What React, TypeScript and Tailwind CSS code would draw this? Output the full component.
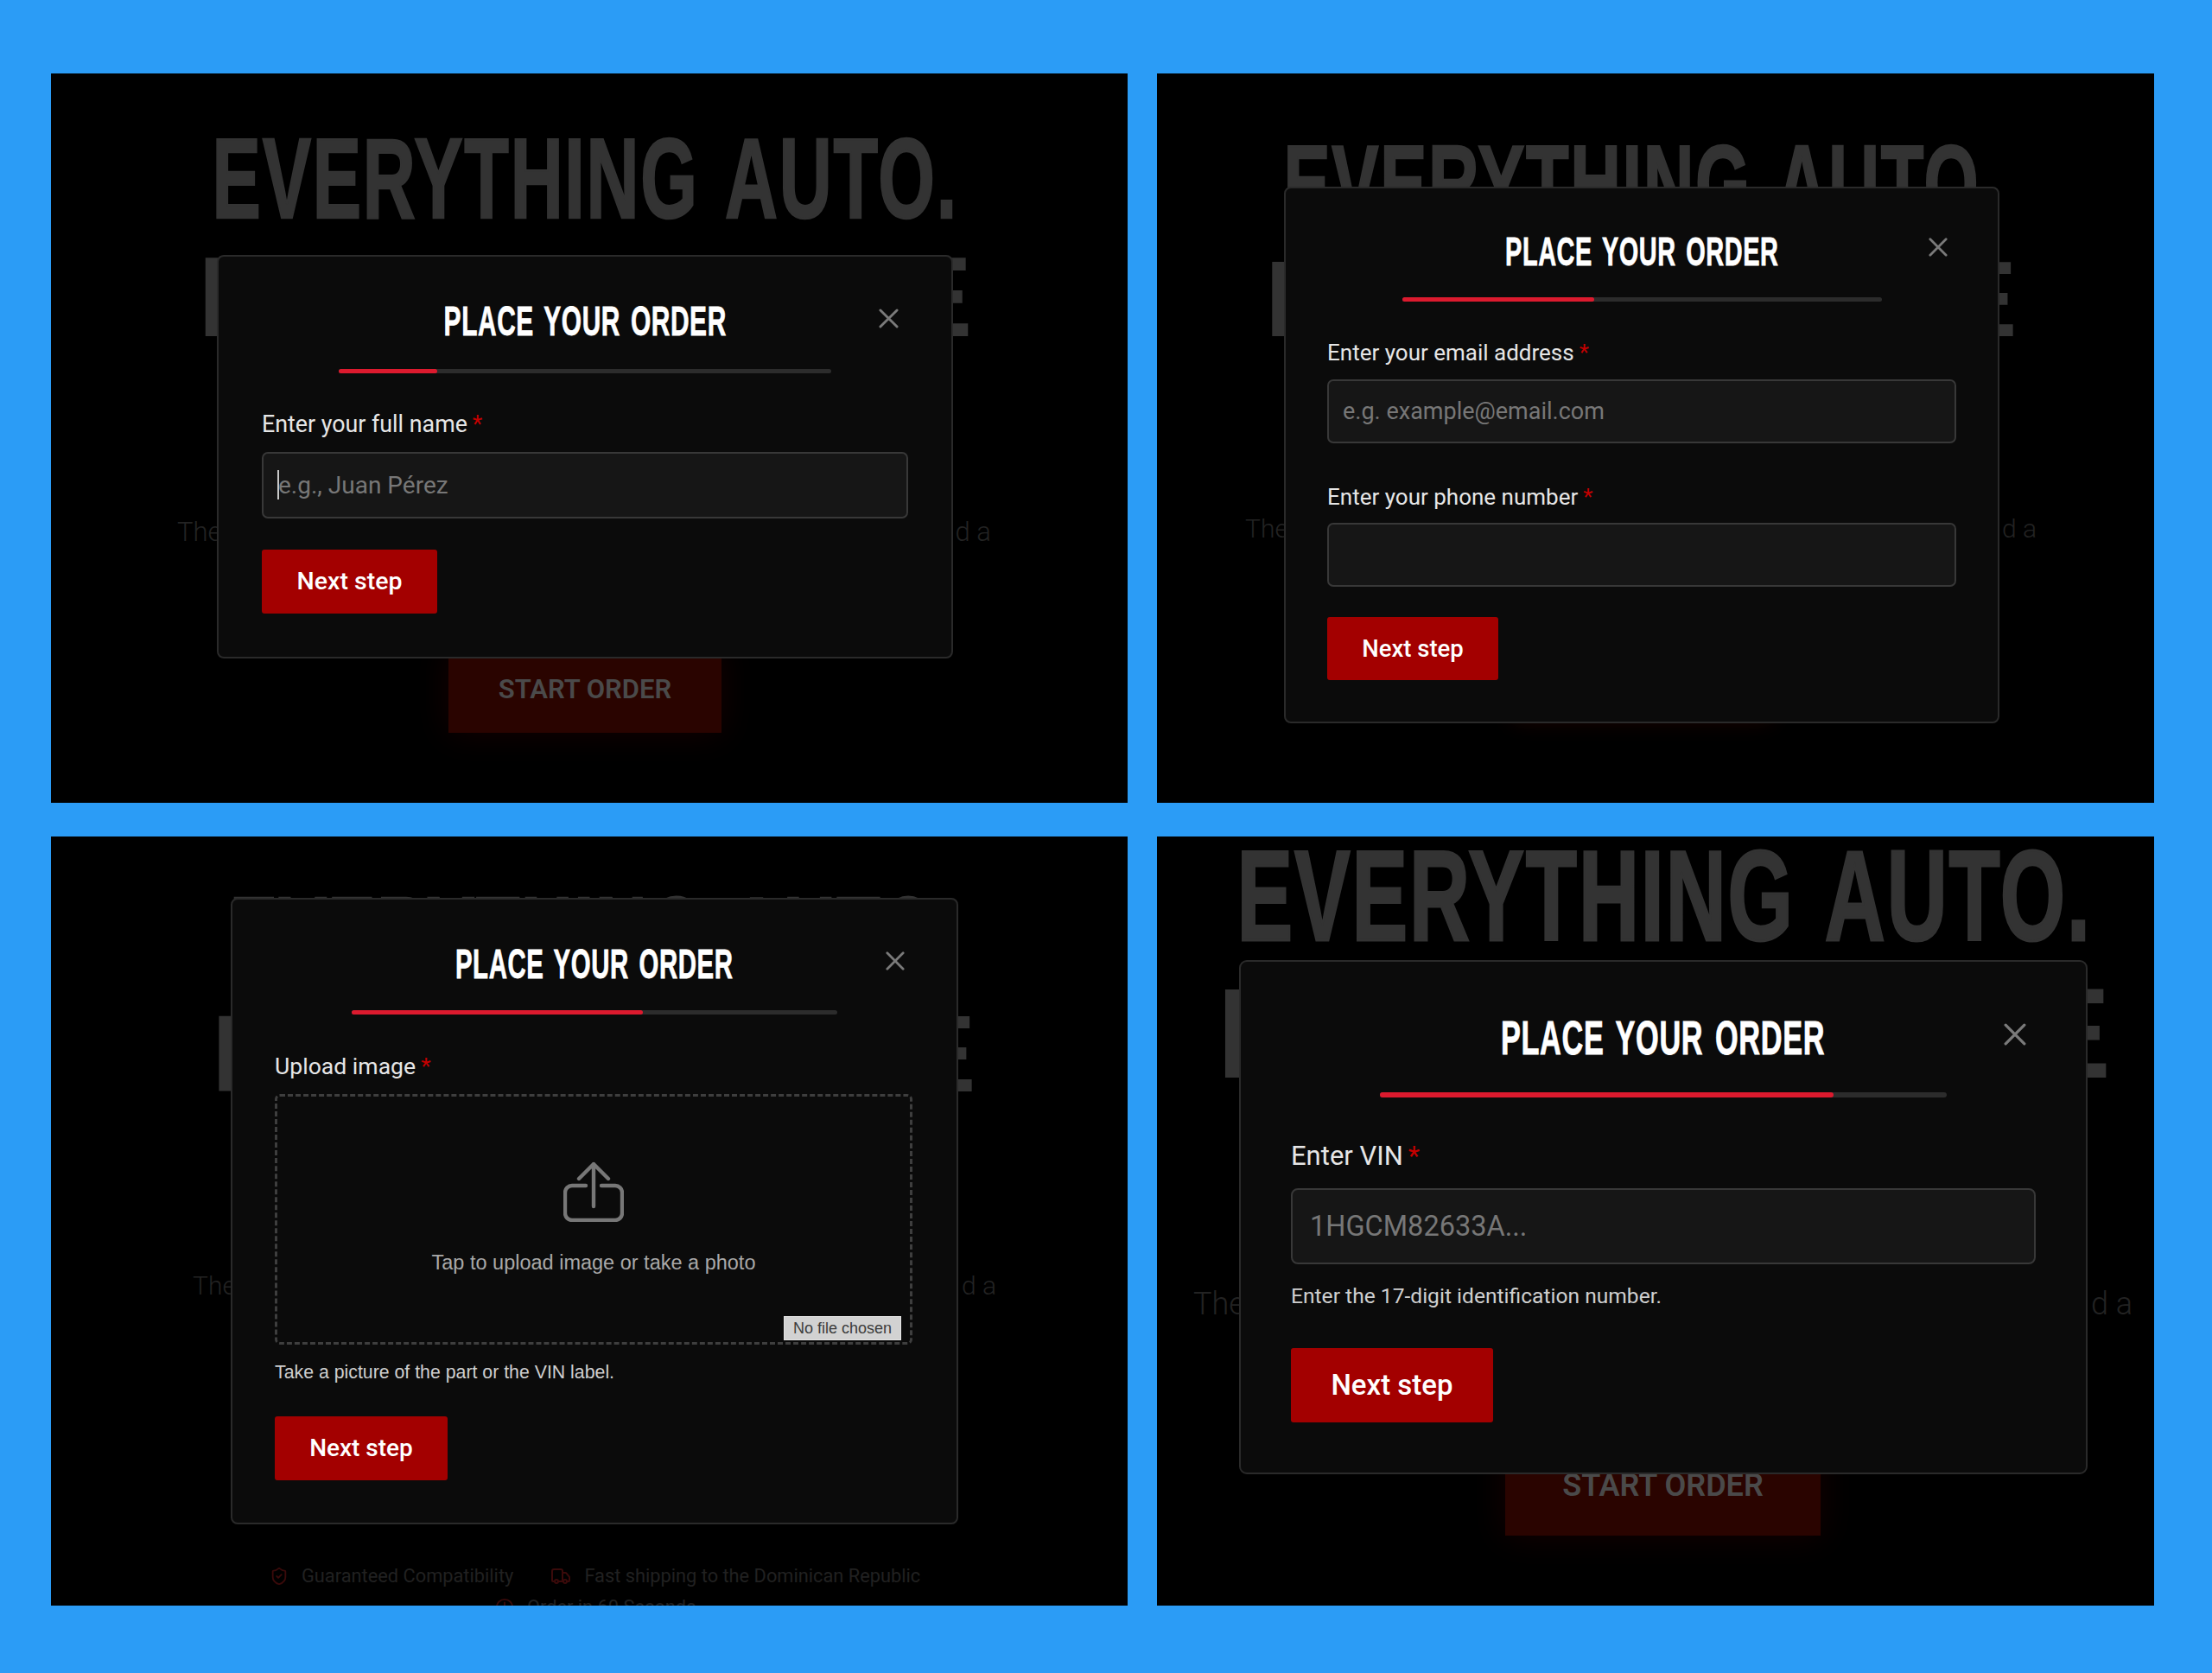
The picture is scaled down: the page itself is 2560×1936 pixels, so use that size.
import React from "react";
import { ShieldCheck, Truck, Clock } from "lucide-react";

const HEAD = "font-['Liberation_Sans',sans-serif] font-bold tracking-[0.02em] [word-spacing:0.1em]";

function CloseIcon({ className }: { className: string }) {
  return (
    <svg viewBox="0 0 24 24" fill="none" stroke="#7a7a7a" strokeWidth="3" strokeLinecap="round" className={className}>
      <path d="M2 2 22 22M22 2 2 22" />
    </svg>
  );
}

function ShareIcon() {
  return (
    <svg viewBox="0 0 70 70" fill="none" stroke="#777" strokeWidth="4.4" strokeLinecap="round" strokeLinejoin="round" className="w-[70px] h-[70px]">
      <path d="M26 28H10a8 8 0 0 0-8 8V60a8 8 0 0 0 8 8H60a8 8 0 0 0 8-8V36a8 8 0 0 0-8-8H44" />
      <path d="M35 52V3M18 20 35 3 52 20" />
    </svg>
  );
}

function Req() {
  return <span className="text-[#c40000] ml-[6px]">*</span>;
}

function Panel1() {
  return (
    <section className="relative overflow-hidden bg-black">
      <div className="pt-[72px] flex flex-col items-start">
        <div className={`ml-[186px] w-[865px] h-[100px] flex items-center justify-center text-[#333] text-[131px] whitespace-nowrap ${HEAD}`}>
          <span className="scale-x-[0.645] [-webkit-text-stroke:2.5px_#333]">EVERYTHING AUTO.</span>
        </div>
        <div className={`ml-[170px] mt-[37px] w-[899px] h-[100px] flex items-center justify-between text-[#333] text-[131px] ${HEAD}`}>
          <span>P</span>
          <span>E</span>
        </div>
        <div className="ml-[146px] mt-[204px] w-[942px] h-[36px] flex items-center justify-between text-[#232323] text-[31px] font-light">
          <span>The</span>
          <span>d a</span>
        </div>
        <div className="ml-[460px] mt-[114px] w-[316px] h-[100px] bg-[#2a0400] shadow-[0_0_40px_rgba(120,10,0,0.18)] flex items-center justify-center text-[#4a4a4a] text-[31px] font-semibold">
          START ORDER
        </div>
      </div>
      <div className="absolute left-[192px] top-[210px] w-[852px] bg-[#0b0b0b] border-2 border-[#2a2a2a] rounded-[8px] p-[50px] flex flex-col">
        <div className="h-[50px] flex items-center justify-center text-white text-[49px] whitespace-nowrap">
          <span className={`scale-x-[0.61] [-webkit-text-stroke:0.8px_#fff] ${HEAD}`}>PLACE YOUR ORDER</span>
        </div>
        <div className="mx-auto mt-[30px] w-[570px] h-[5px] rounded-full bg-[#2c2c2c]">
          <div className="w-[20%] h-full rounded-full bg-[#dc1a2e]" />
        </div>
        <label className="mt-[44px] h-[30px] leading-[30px] text-[26.8px] font-[450] text-[#e6e6e6]">
          Enter your full name<Req />
        </label>
        <div className="relative mt-[17px]">
          <input placeholder="e.g., Juan Pérez" className="w-full h-[77px] bg-[#161616] border-2 border-[#383838] rounded-[7px] pl-[17px] text-[28px] text-white placeholder:text-[#777] outline-none" />
          <span className="absolute left-[18px] top-[21px] w-[2px] h-[34px] bg-[#c8c8c8]" />
        </div>
        <button className="mt-[36px] w-[203px] h-[74px] bg-[#a30000] rounded-[3px] text-white text-[28.5px] font-medium">Next step</button>
      </div>
      <CloseIcon className="absolute left-[958px] top-[272px] w-[23px] h-[23px]" />
    </section>
  );
}

function Panel2() {
  return (
    <section className="relative overflow-hidden bg-black">
      <div className="pt-[79px] flex flex-col items-start">
        <div className={`ml-[145px] w-[833px] h-[96px] flex items-center justify-center text-[#333] text-[124px] whitespace-nowrap ${HEAD}`}>
          <span className="scale-x-[0.655] [-webkit-text-stroke:2.5px_#333]">EVERYTHING AUTO.</span>
        </div>
        <div className={`ml-[125px] mt-[38px] w-[873px] h-[96px] flex items-center justify-between text-[#333] text-[124px] ${HEAD}`}>
          <span>P</span>
          <span>E</span>
        </div>
        <div className="ml-[102px] mt-[199px] w-[916px] h-[36px] flex items-center justify-between text-[#232323] text-[30px] font-light">
          <span>The</span>
          <span>d a</span>
        </div>
        <div className="ml-[411px] mt-[115px] w-[300px] h-[90px] bg-[#2a0400] shadow-[0_0_24px_rgba(120,20,0,0.25)]" />
      </div>
      <div className="absolute left-[147px] top-[131px] w-[828px] bg-[#0b0b0b] border-2 border-[#2a2a2a] rounded-[8px] p-[48px] flex flex-col">
        <div className="h-[50px] flex items-center justify-center text-white text-[47px] whitespace-nowrap">
          <span className={`scale-x-[0.615] [-webkit-text-stroke:0.8px_#fff] ${HEAD}`}>PLACE YOUR ORDER</span>
        </div>
        <div className="mx-auto mt-[28px] w-[555px] h-[5px] rounded-full bg-[#2c2c2c]">
          <div className="w-[40%] h-full rounded-full bg-[#dc1a2e]" />
        </div>
        <label className="mt-[44px] h-[30px] leading-[30px] text-[26px] font-[450] text-[#e6e6e6]">
          Enter your email address<Req />
        </label>
        <input placeholder="e.g. example@email.com" className="mt-[16px] w-full h-[74px] bg-[#161616] border-2 border-[#383838] rounded-[7px] pl-[16px] text-[27px] text-white placeholder:text-[#777] outline-none" />
        <label className="mt-[47px] h-[30px] leading-[30px] text-[26px] font-[450] text-[#e6e6e6]">
          Enter your phone number<Req />
        </label>
        <input className="mt-[15px] w-full h-[74px] bg-[#161616] border-2 border-[#383838] rounded-[7px] outline-none" />
        <button className="mt-[35px] w-[198px] h-[73px] bg-[#a30000] rounded-[3px] text-white text-[27.5px] font-medium">Next step</button>
      </div>
      <CloseIcon className="absolute left-[893px] top-[190px] w-[22px] h-[22px]" />
    </section>
  );
}

function Panel3() {
  return (
    <section className="relative overflow-hidden bg-black">
      <div className="pt-[66px] flex flex-col items-start">
        <div className={`ml-[206px] w-[846px] h-[96px] flex items-center justify-center text-[#333] text-[126px] whitespace-nowrap ${HEAD}`}>
          <span className="scale-x-[0.655] [-webkit-text-stroke:2.5px_#333]">EVERYTHING AUTO.</span>
        </div>
        <div className={`ml-[186px] mt-[41px] w-[887px] h-[96px] flex items-center justify-between text-[#333] text-[126px] ${HEAD}`}>
          <span>P</span>
          <span>E</span>
        </div>
        <div className="ml-[164px] mt-[202px] w-[930px] h-[36px] flex items-center justify-between text-[#232323] text-[30px] font-light">
          <span>The</span>
          <span>d a</span>
        </div>
        <div className="ml-[253px] mt-[304px] h-[30px] flex items-center text-[#212121] text-[21.8px] whitespace-nowrap">
          <ShieldCheck className="w-[22px] h-[24px] text-[#3a0a0a]" />
          <span className="ml-[15px]">Guaranteed Compatibility</span>
          <Truck className="ml-[43px] w-[24px] h-[24px] text-[#3a0a0a]" />
          <span className="ml-[15px]">Fast shipping to the Dominican Republic</span>
        </div>
        <div className="ml-[514px] mt-[6px] h-[30px] flex items-center text-[#212121] text-[21.8px] whitespace-nowrap">
          <Clock className="w-[22px] h-[22px] text-[#3a0a0a]" />
          <span className="ml-[15px]">Order in 60 Seconds</span>
        </div>
      </div>
      <div className="absolute left-[208px] top-[71px] w-[842px] bg-[#0b0b0b] border-2 border-[#2a2a2a] rounded-[8px] p-[49px] flex flex-col">
        <div className="h-[52px] flex items-center justify-center text-white text-[48px] whitespace-nowrap">
          <span className={`scale-x-[0.612] [-webkit-text-stroke:0.8px_#fff] ${HEAD}`}>PLACE YOUR ORDER</span>
        </div>
        <div className="mx-auto mt-[27px] w-[562px] h-[5px] rounded-full bg-[#2c2c2c]">
          <div className="w-[60%] h-full rounded-full bg-[#dc1a2e]" />
        </div>
        <label className="mt-[45px] h-[30px] leading-[30px] text-[26.6px] font-[450] text-[#e6e6e6]">
          Upload image<Req />
        </label>
        <div className="relative mt-[17px] w-[738px] h-[290px] border-[3px] border-dashed border-[#3e3e3e] rounded-[6px] flex flex-col items-center pt-[75px]">
          <ShareIcon />
          <span className="mt-[30px] text-[#a8a8a8] text-[23.5px] font-['Liberation_Sans',sans-serif]">Tap to upload image or take a photo</span>
          <span className="absolute right-[10px] bottom-[2px] w-[136px] h-[28px] bg-[#d2d2d2] border border-[#e4e4e4] text-[#3c3c3c] text-[18px] leading-[26px] text-center font-['Liberation_Sans',sans-serif]">No file chosen</span>
        </div>
        <p className="mt-[18px] h-[28px] leading-[28px] text-[#cfcfcf] text-[21.3px] font-['Liberation_Sans',sans-serif]">Take a picture of the part or the VIN label.</p>
        <button className="mt-[37px] w-[200px] h-[74px] bg-[#a30000] rounded-[3px] text-white text-[28px] font-medium">Next step</button>
      </div>
      <CloseIcon className="absolute left-[966px] top-[133px] w-[22px] h-[22px]" />
    </section>
  );
}

function Panel4() {
  return (
    <section className="relative overflow-hidden bg-black">
      <div className="pt-[13px] flex flex-col items-start">
        <div className={`ml-[90px] w-[994px] h-[112px] flex items-center justify-center text-[#333] text-[149px] whitespace-nowrap ${HEAD}`}>
          <span className="scale-x-[0.65] [-webkit-text-stroke:3px_#333]">EVERYTHING AUTO.</span>
        </div>
        <div className={`ml-[69px] mt-[47px] w-[1038px] h-[112px] flex items-center justify-between text-[#333] text-[149px] ${HEAD}`}>
          <span>P</span>
          <span>E</span>
        </div>
        <div className="ml-[42px] mt-[239px] w-[1087px] h-[36px] flex items-center justify-between text-[#232323] text-[36px] font-light">
          <span>The</span>
          <span>d a</span>
        </div>
        <div className="ml-[403px] mt-[134px] w-[365px] h-[116px] bg-[#2a0400] shadow-[0_0_40px_rgba(120,10,0,0.18)] flex items-center justify-center text-[#4a4a4a] text-[36px] font-semibold">
          START ORDER
        </div>
      </div>
      <div className="absolute left-[95px] top-[143px] w-[982px] bg-[#0b0b0b] border-2 border-[#2a2a2a] rounded-[9px] p-[58px] flex flex-col">
        <div className="h-[60px] flex items-center justify-center text-white text-[56px] whitespace-nowrap">
          <span className={`scale-x-[0.612] [-webkit-text-stroke:0.9px_#fff] ${HEAD}`}>PLACE YOUR ORDER</span>
        </div>
        <div className="mx-auto mt-[33px] w-[656px] h-[6px] rounded-full bg-[#2c2c2c]">
          <div className="w-[80%] h-full rounded-full bg-[#dc1a2e]" />
        </div>
        <label className="mt-[51px] h-[34px] leading-[34px] text-[31px] font-[450] text-[#e6e6e6]">
          Enter VIN<Req />
        </label>
        <input placeholder="1HGCM82633A..." className="mt-[20px] w-full h-[88px] bg-[#161616] border-2 border-[#383838] rounded-[8px] pl-[20px] text-[32.5px] text-white placeholder:text-[#777] outline-none" />
        <p className="mt-[21px] h-[32px] leading-[32px] text-[#cfcfcf] text-[24.6px]">Enter the 17-digit identification number.</p>
        <button className="mt-[44px] w-[234px] h-[86px] bg-[#a30000] rounded-[3px] text-white text-[33px] font-medium">Next step</button>
      </div>
      <CloseIcon className="absolute left-[980px] top-[216px] w-[26px] h-[26px]" />
    </section>
  );
}

export default function App() {
  return (
    <main className="w-[2560px] h-[1936px] bg-[#2b9cf6] pl-[59px] pt-[85px] grid grid-cols-[1246px_1154px] grid-rows-[844px_890px] gap-x-[34px] gap-y-[39px] font-['Roboto',sans-serif]">
      <Panel1 />
      <Panel2 />
      <Panel3 />
      <Panel4 />
    </main>
  );
}
